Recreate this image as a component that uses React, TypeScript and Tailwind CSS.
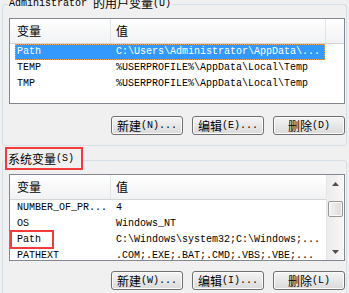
import React from "react";

const MONO = "font-['Liberation_Mono','Noto_Sans_CJK_SC',monospace]";
const CJK = "font-['Noto_Sans_CJK_SC',sans-serif]";

function Btn({ cjk, rest }: { cjk: string; rest: string }) {
  return (
    <div className="w-[72px] h-[19px] border border-[#707070] rounded-[3px] bg-linear-to-b from-[#f5f5f5] to-[#dadada] shadow-[inset_0_0_0_1px_#fbfbfb] flex items-center justify-center text-black">
      <span className={`${CJK} text-[12px] leading-none`}>{cjk}</span>
      <span className={`${MONO} text-[10px] leading-none`}>{rest}</span>
    </div>
  );
}

type Row = [string, string];

function Rows({ rows, selected }: { rows: Row[]; selected?: number }) {
  return (
    <div className="flex flex-col">
      {rows.map((r, i) => {
        const sel = i === selected;
        return (
          <div
            key={i}
            className={`ml-[5px] w-[310px] h-[16px] flex items-center ${MONO} text-[10px] leading-none whitespace-nowrap ${
              sel
                ? "bg-[#3399ff] text-white outline-1 outline-dotted outline-[#f0a050] -outline-offset-1"
                : "text-black"
            }`}
          >
            <div className="w-[96px] pl-[2px] overflow-hidden">{r[0]}</div>
            <div className="pl-[5px]">{r[1]}</div>
          </div>
        );
      })}
    </div>
  );
}

function Header({ filler }: { filler: boolean }) {
  return (
    <div className="flex h-[25px] border-b border-[#d5d5d5] bg-linear-to-b from-white to-[#f1f2f4] text-black">
      <div className={`w-[101px] border-r border-[#e3e4e6] pl-[7px] flex items-center ${CJK} text-[12px]`}>变量</div>
      {filler ? (
        <>
          <div className={`w-[215px] border-r border-[#e3e4e6] pl-[5px] flex items-center ${CJK} text-[12px]`}>值</div>
          <div className="flex-1" />
        </>
      ) : (
        <div className={`flex-1 pl-[5px] flex items-center ${CJK} text-[12px]`}>值</div>
      )}
    </div>
  );
}

function Arrow({ up }: { up: boolean }) {
  return (
    <svg width="7" height="4" viewBox="0 0 7 4">
      {up ? <polygon points="0,4 7,4 3.5,0" fill="#4d4d4d" /> : <polygon points="0,0 7,0 3.5,4" fill="#4d4d4d" />}
    </svg>
  );
}

export default function App() {
  const userRows: Row[] = [
    ["Path", "C:\\Users\\Administrator\\AppData\\..."],
    ["TEMP", "%USERPROFILE%\\AppData\\Local\\Temp"],
    ["TMP", "%USERPROFILE%\\AppData\\Local\\Temp"],
  ];
  const sysRows: Row[] = [
    ["NUMBER_OF_PR...", "4"],
    ["OS", "Windows_NT"],
    ["Path", "C:\\Windows\\system32;C:\\Windows;..."],
    ["PATHEXT", ".COM;.EXE;.BAT;.CMD;.VBS;.VBE;..."],
  ];
  return (
    <div className="w-[349px] h-[293px] bg-[#f0f0f0] overflow-hidden flex flex-col">
      {/* User variables group */}
      <div className="relative mt-[4px] ml-[2px] w-[345px] h-[142px] shrink-0 border border-[#d5dfe5] rounded-[3px] pl-[6px] pt-[13px]">
        <div className="absolute left-[5px] top-[-9px] h-[14px] px-[1px] bg-[#f0f0f0] flex items-center text-black whitespace-nowrap">
          <span className={`${MONO} text-[10px]`}>Administrator&nbsp;</span>
          <span className={`${CJK} text-[12px]`}>的用户变量</span>
          <span className={`${MONO} text-[10px]`}>(U)</span>
        </div>
        <div className="w-[336px] h-[86px] border border-[#828790] bg-white overflow-hidden">
          <Header filler />
          <Rows rows={userRows} selected={0} />
        </div>
        <div className="w-[336px] mt-[12px] flex justify-end gap-[9px]">
          <Btn cjk="新建" rest="(N)..." />
          <Btn cjk="编辑" rest="(E)..." />
          <Btn cjk="删除" rest="(D)" />
        </div>
      </div>

      {/* System variables group */}
      <div className="relative mt-[14px] ml-[2px] w-[345px] h-[160px] shrink-0 border border-[#d5dfe5] rounded-[3px] pl-[6px] pt-[13px]">
        <div className="absolute left-[2px] top-[-14px] w-[78px] h-[23px] border-2 border-[#f43b3b] bg-[#f0f0f0] flex items-center pl-[1px] text-black whitespace-nowrap">
          <span className={`${CJK} text-[12px]`}>系统变量</span>
          <span className={`${MONO} text-[10px]`}>(S)</span>
        </div>
        <div className="w-[336px] h-[87px] border border-[#828790] bg-white overflow-hidden flex">
          <div className="relative w-[316px]">
            <Header filler={false} />
            <Rows rows={sysRows} />
            <div className="absolute left-0 top-[55px] w-[44px] h-[19px] border-2 border-[#f43b3b]" />
          </div>
          <div className="w-[17px] flex flex-col items-center bg-linear-to-r from-[#ececec] to-[#f6f6f6] border-l border-[#e6e6e6]">
            <div className="h-[17px] flex items-center justify-center">
              <Arrow up />
            </div>
            <div className="mt-[9px] w-[15px] h-[16px] border border-[#979797] rounded-[2px] bg-linear-to-r from-[#f2f2f2] to-[#dcdcdc] shadow-[inset_0_0_0_1px_#fafafa]" />
            <div className="flex-1" />
            <div className="h-[17px] flex items-center justify-center">
              <Arrow up={false} />
            </div>
          </div>
        </div>
        <div className="w-[336px] mt-[10px] flex justify-end gap-[9px]">
          <Btn cjk="新建" rest="(W)..." />
          <Btn cjk="编辑" rest="(I)..." />
          <Btn cjk="删除" rest="(L)" />
        </div>
      </div>
    </div>
  );
}
